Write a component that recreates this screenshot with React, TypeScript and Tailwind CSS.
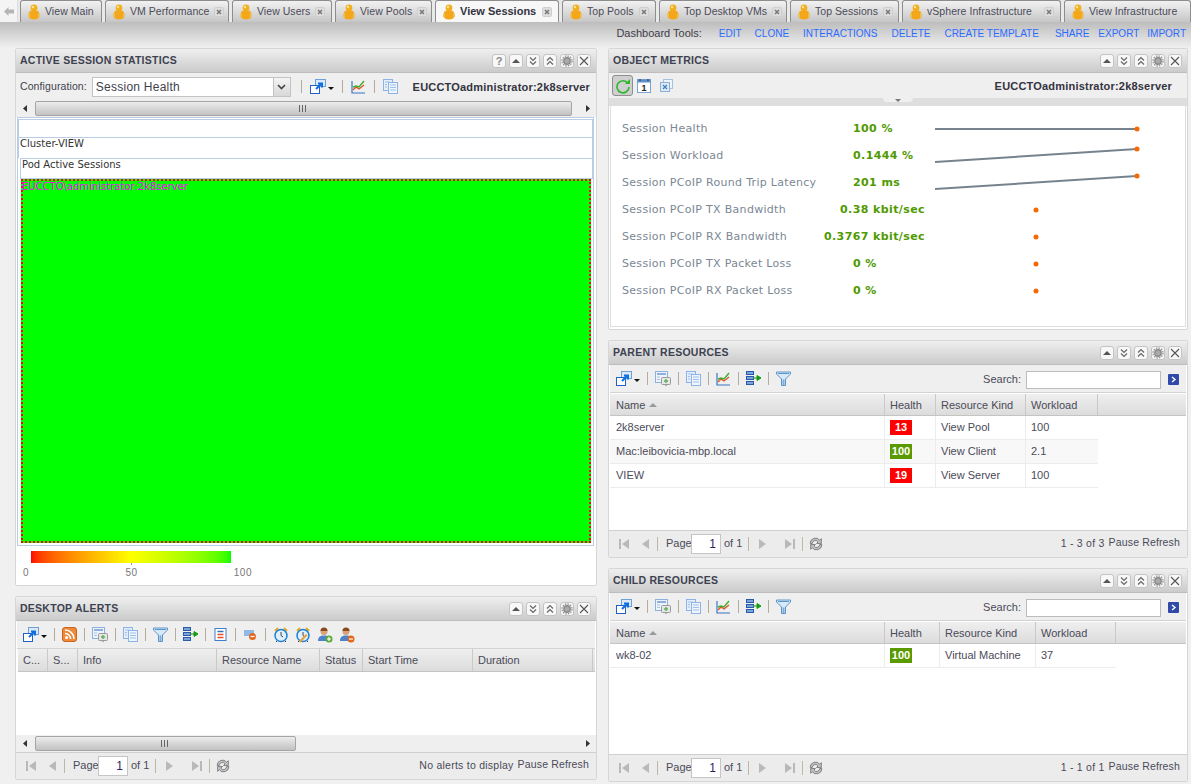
import React from "react"

const tabs = [
  { label: "View Main", w: "w-[82px]", close: false },
  { label: "VM Performance", w: "w-[124px]", close: true },
  { label: "View Users", w: "w-[100px]", close: true },
  { label: "View Pools", w: "w-[97px]", close: true },
  { label: "View Sessions", w: "w-[124px]", close: true, active: true },
  { label: "Top Pools", w: "w-[94px]", close: true },
  { label: "Top Desktop VMs", w: "w-[128px]", close: true },
  { label: "Top Sessions", w: "w-[109px]", close: true },
  { label: "vSphere Infrastructure", w: "w-[159px]", close: true },
  { label: "View Infrastructure", w: "w-[127px]", close: false },
]

const metrics = [
  { label: "Session Health", value: "100 %", line: [13, 13] },
  { label: "Session Workload", value: "0.1444 %", line: [19, 6] },
  { label: "Session PCoIP Round Trip Latency", value: "201 ms", line: [19, 6] },
  { label: "Session PCoIP TX Bandwidth", value: "0.38 kbit/sec", right: true },
  { label: "Session PCoIP RX Bandwidth", value: "0.3767 kbit/sec", right: true },
  { label: "Session PCoIP TX Packet Loss", value: "0 %" },
  { label: "Session PCoIP RX Packet Loss", value: "0 %" },
]

function Person() {
  return (
    <svg width="12" height="16" viewBox="0 0 12 16" className="shrink-0">
      <circle cx="6" cy="4" r="3.400" fill="#f2b01e" />
      <path d="M1 8.500C1 7 3 6.500 6 6.500s5 .5 5 2V13c0 1.500-2 2.500-5 2.500S1 14.500 1 13z" fill="#f5a71c" />
      <path d="M0 9.500h2V13H0zM10 9.500h2V13h-2z" fill="#e8c25a" />
      <circle cx="5" cy="3" r="1.200" fill="#fbe39a" />
    </svg>
  )
}

function CloseTab() {
  return (
    <svg width="10" height="10" viewBox="0 0 10 10" className="shrink-0">
      <rect x="0.500" y="0.500" width="9" height="9" rx="1.500" fill="#dedede" stroke="#cfcfcf" />
      <path d="M3 3l4 4M7 3l-4 4" stroke="#777" strokeWidth="1.500" />
    </svg>
  )
}

function Tab({ label, w, close, active }: { label: string; w: string; close: boolean; active?: boolean }) {
  return (
    <div
      className={`${w} shrink-0 h-[22px] flex items-center pl-[7px] pr-[6px] gap-[5px] border border-b-0 border-[#8d8d8d] rounded-t-[3px] whitespace-nowrap ${
        active ? "bg-[#f7f7f7] font-bold text-[11px] text-[#333340]" : "bg-gradient-to-b from-[#f2f2f2] to-[#c6c6c6] text-[10.5px] tracking-[0.05px] text-[#4a4a58]"
      }`}
    >
      <Person />
      <span className="flex-1">{label}</span>
      {close && <CloseTab />}
    </div>
  )
}

function WinIcon({ kind }: { kind: string }) {
  return (
    <div className="w-[14px] h-[14px] rounded-[3px] border border-[#c4c4c4] bg-[#f8f8f8] flex items-center justify-center">
      <svg width="12" height="12" viewBox="0 0 12 12">
        {kind === "help" && <text x="6" y="10" textAnchor="middle" fontSize="11" fontWeight="700" fontFamily="Liberation Sans" fill="#888">?</text>}
        {kind === "up" && <path d="M2 8l4-4 4 4z" fill="#555" />}
        {kind === "down2" && <path d="M3 2.500l3 3 3-3M3 6.500l3 3 3-3" fill="none" stroke="#666" strokeWidth="1.200" />}
        {kind === "up2" && <path d="M3 5.500l3-3 3 3M3 9.500l3-3 3 3" fill="none" stroke="#666" strokeWidth="1.200" />}
        {kind === "gear" && (
          <g>
            <circle cx="6" cy="6" r="3.200" fill="#aaa" stroke="#888" strokeWidth="1.400" />
            <circle cx="6" cy="6" r="5" fill="none" stroke="#999" strokeWidth="1.400" strokeDasharray="1.500 1.100" />
          </g>
        )}
        {kind === "x" && <path d="M2 2l8 8M10 2l-8 8" stroke="#555" strokeWidth="1.100" />}
      </svg>
    </div>
  )
}

function PanelHeader({ title, help }: { title: string; help?: boolean }) {
  return (
    <div className="h-[24px] shrink-0 flex items-center justify-between pl-[4px] pr-[5px] bg-gradient-to-b from-[#efefef] to-[#cbcbcb] border-b border-[#bdbdbd]">
      <span className="text-[10.5px] font-bold tracking-[0.25px] text-[#3d4250]">{title}</span>
      <div className="flex gap-[3px]">
        {help && <WinIcon kind="help" />}
        <WinIcon kind="up" />
        <WinIcon kind="down2" />
        <WinIcon kind="up2" />
        <WinIcon kind="gear" />
        <WinIcon kind="x" />
      </div>
    </div>
  )
}

function Sep() {
  return <div className="w-px h-[13px] bg-[#b5ad9c] shrink-0" />
}

function ExportIcon() {
  return (
    <svg width="24" height="16" viewBox="0 0 24 16" className="shrink-0">
      <rect x="5.500" y="0.500" width="10" height="7" fill="#dbe9fa" stroke="#6f9fd8" />
      <rect x="0.500" y="6.500" width="9" height="8" fill="#fff" stroke="#1f62c4" />
      <path d="M6 10l5-5M8 4.500h4v4" fill="none" stroke="#0f6fe0" strokeWidth="2" />
      <path d="M18 8h6l-3 3z" fill="#111" />
    </svg>
  )
}

function ChartIcon() {
  return (
    <svg width="15" height="14" viewBox="0 0 15 14" className="shrink-0">
      <path d="M1 1v12h13" fill="none" stroke="#3a76c4" strokeWidth="1.200" />
      <path d="M2 10l3-3 3 2 5-4" fill="none" stroke="#e2562a" strokeWidth="1.400" />
      <path d="M2 7l3-1 3 1 5-6" fill="none" stroke="#3fae2f" strokeWidth="1.400" />
    </svg>
  )
}

function CopyIcon() {
  return (
    <svg width="15" height="15" viewBox="0 0 15 15" className="shrink-0">
      <rect x="0.500" y="0.500" width="9" height="11" fill="#e5effb" stroke="#8db3e6" />
      <rect x="5.500" y="3.500" width="9" height="11" fill="#eef5fd" stroke="#8db3e6" />
      <path d="M7 6h6M7 8.500h6M7 11h6M2 3h5M2 5.500h2M2 8h2" stroke="#9dbfec" />
    </svg>
  )
}

function ConfigIcon() {
  return (
    <svg width="16" height="16" viewBox="0 0 16 16" className="shrink-0">
      <rect x="0.500" y="0.500" width="12" height="11" fill="#edf3fb" stroke="#8fb0dc" />
      <path d="M2 3h9" stroke="#8fb0dc" strokeWidth="2" />
      <path d="M2 6h3M2 8.500h3" stroke="#a8c3e6" />
      <rect x="6.500" y="6.500" width="9" height="7" rx="1" fill="#e6e6e6" stroke="#9a9a9a" />
      <path d="M9 10h4M11 8v4" stroke="#5db35d" strokeWidth="1.400" />
      <path d="M10 14l1 1.500 1-1.500z" fill="#9a9a9a" />
    </svg>
  )
}

function MoveIcon() {
  return (
    <svg width="15" height="15" viewBox="0 0 15 15" className="shrink-0">
      <rect x="0.500" y="0.500" width="7" height="3" fill="#7aa2dc" stroke="#2a5aa8" />
      <rect x="0.500" y="5.500" width="7" height="3" fill="#7aa2dc" stroke="#2a5aa8" />
      <rect x="0.500" y="10.500" width="7" height="3" fill="#7aa2dc" stroke="#2a5aa8" />
      <path d="M7 7h4V4.500L15 7l-4 2.500V7" fill="#159a15" stroke="#159a15" />
    </svg>
  )
}

function FunnelIcon() {
  return (
    <svg width="15" height="15" viewBox="0 0 15 15" className="shrink-0">
      <path d="M0.500 1h14v2L9.500 8v6.500h-4V8L.5 3z" fill="#d7e8f8" stroke="#5d95c9" />
      <path d="M2 2.500h11" stroke="#5d95c9" />
      <path d="M6.500 8.500h2V14h-2z" fill="#7aaedb" />
    </svg>
  )
}

function RssIcon() {
  return (
    <svg width="15" height="15" viewBox="0 0 15 15" className="shrink-0">
      <rect x="0.500" y="0.500" width="14" height="14" rx="2.500" fill="#ee8a3a" stroke="#c9651d" />
      <circle cx="4.500" cy="10.500" r="1.500" fill="#fff" />
      <path d="M3 6.500a5.500 5.500 0 0 1 5.500 5.500M3 3a9 9 0 0 1 9 9" fill="none" stroke="#fff" strokeWidth="1.500" />
    </svg>
  )
}

function ListIcon() {
  return (
    <svg width="15" height="15" viewBox="0 0 15 15" className="shrink-0">
      <rect x="2" y="1.500" width="11" height="12" fill="#fff" stroke="#3f7fcf" />
      <path d="M4.500 4.500h6" stroke="#2f6fc0" strokeWidth="1.500" />
      <path d="M4.500 7.500h6M4.500 10.500h6" stroke="#ee4b2b" strokeWidth="1.500" />
    </svg>
  )
}

function AlertRemoveIcon() {
  return (
    <svg width="15" height="15" viewBox="0 0 15 15" className="shrink-0">
      <rect x="1" y="3" width="10" height="6" fill="#8fb8e6" />
      <circle cx="9.500" cy="9.500" r="3.500" fill="#e3661d" />
      <path d="M7.500 9.500h4" stroke="#fff" strokeWidth="1.200" />
    </svg>
  )
}

function ClockIcon({ pencil }: { pencil?: boolean }) {
  return (
    <svg width="16" height="16" viewBox="0 0 16 16" className="shrink-0">
      <path d="M2 4l3-3M14 4l-3-3" stroke="#e6a91e" strokeWidth="2" />
      <path d="M3 15l2-2M13 15l-2-2" stroke="#333" />
      <circle cx="8" cy="8.500" r="6" fill="#dff0fb" stroke="#1d7fd6" strokeWidth="1.500" />
      <path d="M8 5v3.500l2 1.500" fill="none" stroke="#444" />
      {pencil && <path d="M4 14l7-7 1.500 1.500-7 7z" fill="#e8a13a" />}
    </svg>
  )
}

function UserIcon({ remove }: { remove?: boolean }) {
  return (
    <svg width="16" height="16" viewBox="0 0 16 16" className="shrink-0">
      <circle cx="7" cy="4.500" r="3.500" fill="#d8a27a" />
      <path d="M3.500 4a3.500 3.500 0 0 1 7 0z" fill="#8a4a1e" />
      <path d="M1 14c0-4 2-5.500 6-5.500s6 1.500 6 5.500z" fill="#4d83c9" />
      <circle cx="12" cy="12" r="3.500" fill={remove ? "#e3661d" : "#5aa83a"} />
      <path d={remove ? "M10 12h4" : "M10 12h4M12 10v4"} stroke="#fff" strokeWidth="1.200" />
    </svg>
  )
}

function GridTools() {
  return (
    <>
      <ExportIcon />
      <Sep />
      <ConfigIcon />
      <Sep />
      <CopyIcon />
      <Sep />
      <ChartIcon />
      <Sep />
      <MoveIcon />
      <Sep />
      <FunnelIcon />
    </>
  )
}

function HScroll({ thumb, grip }: { thumb: string; grip: string }) {
  return (
    <div className="h-[17px] shrink-0 flex items-center bg-[#efefef]">
      <div className="w-[19px] flex justify-center shrink-0">
        <svg width="5" height="7" viewBox="0 0 5 7"><path d="M4 0L0 3.500 4 7z" fill="#333" /></svg>
      </div>
      <div className={`${thumb} h-[15px] rounded-[2px] border border-[#a5a5a5] bg-gradient-to-b from-[#ececec] to-[#c2c2c2] flex items-center ${grip}`}>
        <span className="w-[7px] h-[7px] border-x border-[#666] flex justify-center">
          <span className="w-px h-full bg-[#666]" />
        </span>
      </div>
      <div className="flex-1" />
      <div className="w-[17px] flex justify-center shrink-0">
        <svg width="5" height="7" viewBox="0 0 5 7"><path d="M1 0l4 3.500L1 7z" fill="#333" /></svg>
      </div>
    </div>
  )
}

function Pager({ info }: { info: string }) {
  const nav = "#b9b9b9"
  return (
    <div className="h-[27px] shrink-0 flex items-center pl-[8px] pr-[7px] pb-[1px] bg-[#ececec] border-t border-[#cfcfcf] text-[11px] text-[#4a4a58]">
      <svg width="12" height="12" viewBox="0 0 12 12" className="ml-[1px]"><path d="M1 1h2v10H1zM11 1v10L4 6z" fill={nav} /></svg>
      <svg width="10" height="12" viewBox="0 0 10 12" className="ml-[11px]"><path d="M8 1v10L1 6z" fill={nav} /></svg>
      <div className="w-px h-[14px] bg-[#bdb6a6] ml-[6px]" />
      <span className="ml-[8px] w-[25px]">Page</span>
      <div className="w-[30px] h-[20px] bg-white border border-[#c5c5c5] flex items-center justify-end pr-[4px] text-[12px] text-[#332266]">1</div>
      <span className="ml-[3px]">of 1</span>
      <div className="w-px h-[14px] bg-[#bdb6a6] ml-[6px]" />
      <svg width="10" height="12" viewBox="0 0 10 12" className="ml-[8px]"><path d="M2 1v10l7-5z" fill={nav} /></svg>
      <svg width="12" height="12" viewBox="0 0 12 12" className="ml-[17px]"><path d="M1 1v10l7-5zM9 1h2v10H9z" fill={nav} /></svg>
      <div className="w-px h-[14px] bg-[#bdb6a6] ml-[6px]" />
      <svg width="16" height="16" viewBox="0 0 15 15" className="ml-[5px]">
        <path d="M2 7a5 5 0 0 1 9-3l1.500-1.500V7H8l1.500-1.500A3 3 0 0 0 4 7z" fill="#c4c4c4" stroke="#666" strokeWidth="0.700" />
        <path d="M13 8a5 5 0 0 1-9 3l-1.500 1.500V8H7l-1.500 1.500A3 3 0 0 0 11 8z" fill="#c4c4c4" stroke="#666" strokeWidth="0.700" />
      </svg>
      <div className="flex-1" />
      <span className="text-[10.5px] tracking-[0.25px]">{info}</span>
      <span className="ml-[4px] mb-[1px] text-[10.5px] tracking-[0.15px]">Pause Refresh</span>
    </div>
  )
}

function HeaderCell({ w, first, children }: { w: string; first?: boolean; children: React.ReactNode }) {
  return (
    <div className={`${w} ${first ? "pl-[6px]" : "pl-[5px]"} shrink-0 h-full pt-[1px] flex items-center border-r border-[#c9c9c9] text-[11px] text-[#4a4a58] whitespace-nowrap overflow-hidden`}>
      {children}
    </div>
  )
}

function NameSort() {
  return (
    <>
      Name
      <svg width="8" height="4" viewBox="0 0 8 4" className="ml-[4px]"><path d="M0 4l4-4 4 4z" fill="#999" /></svg>
    </>
  )
}

function Badge({ n, green }: { n: string; green?: boolean }) {
  return (
    <span className={`w-[22px] h-[15px] flex items-center justify-center text-[11px] font-bold text-white ${green ? "bg-[#5a9a00]" : "bg-[#ff0000]"}`}>
      {n}
    </span>
  )
}

function Row({ cells, w, tint }: { cells: [string, string, boolean, string, string]; w: string[]; tint?: boolean }) {
  const cell = "shrink-0 h-full flex items-center border-r border-[#ececec]"
  return (
    <div className={`flex h-[24px] border-b border-[#ececec] text-[11px] text-[#4a4a58] w-fit ${tint ? "bg-[#f8f8f8]" : "bg-white"}`}>
      <div className={`${cell} pl-[6px] ${w[0]}`}>{cells[0]}</div>
      <div className={`${cell} pl-[5px] ${w[1]}`}><Badge n={cells[1]} green={cells[2]} /></div>
      <div className={`${cell} pl-[5px] ${w[2]}`}>{cells[3]}</div>
      <div className={`${w[3]} shrink-0 h-full flex items-center pl-[5px]`}>{cells[4]}</div>
    </div>
  )
}

function SearchBox() {
  return (
    <div className="ml-auto pt-[2px] flex items-center text-[11px] text-[#4a4a58]">
      Search:
      <div className="ml-[5px] w-[135px] h-[18px] bg-white border border-[#bcbcbc]" />
      <div className="ml-[7px] w-[11px] h-[11px] rounded-[1px] bg-[#2f4aa8] flex items-center justify-center">
        <svg width="7" height="7" viewBox="0 0 7 7"><path d="M2 1l3 2.500L2 6" fill="none" stroke="#fff" strokeWidth="1.400" /></svg>
      </div>
    </div>
  )
}

function ResourcePanel({
  title,
  rows,
  widths,
  footer,
  h,
}: {
  title: string
  rows: [string, string, boolean, string, string][]
  widths: string[]
  footer: string
  h: string
}) {
  return (
    <section className={`${h} shrink-0 flex flex-col bg-white border border-[#d6d6d6] rounded-[2px]`}>
      <PanelHeader title={title} />
      <div className="h-[28px] shrink-0 flex items-center gap-[7px] pl-[6px] pr-[7px] bg-[#efefef] border-b border-[#d2d2d2] mx-px">
        <GridTools />
        <SearchBox />
      </div>
      <div className="flex-1 flex flex-col mx-[1px] pt-[1px] min-h-0">
        <div className="h-[22px] shrink-0 flex bg-gradient-to-b from-[#efefef] to-[#dcdcdc] border-b border-[#c4c4c4]">
          <HeaderCell w={widths[0]} first><NameSort /></HeaderCell>
          <HeaderCell w={widths[1]}>Health</HeaderCell>
          <HeaderCell w={widths[2]}>Resource Kind</HeaderCell>
          <HeaderCell w={widths[3]}>Workload</HeaderCell>
        </div>
        {rows.map((r, i) => (
          <Row key={r[0]} cells={r} w={widths} tint={i === 1} />
        ))}
      </div>
      <Pager info={footer} />
    </section>
  )
}

export default function App() {
  const alertCols: [string, string][] = [
    ["w-[30px]", "C..."],
    ["w-[30px]", "S..."],
    ["w-[139px]", "Info"],
    ["w-[103px]", "Resource Name"],
    ["w-[43px]", "Status"],
    ["w-[110px]", "Start Time"],
    ["w-[120px]", "Duration"],
  ]
  return (
    <div className="w-[1191px] h-[784px] overflow-hidden bg-[#f0f0f0] font-['Liberation_Sans',Arial,sans-serif]">
      {/* dashboard tabs */}
      <div className="h-[22px] flex items-start bg-[#e9e9e9]">
        <div className="w-[18px] h-[22px] shrink-0 flex items-center justify-center bg-[#f4f4f4] border-r border-[#ddd] mr-[2px]">
          <svg width="10" height="9" viewBox="0 0 10 9"><path d="M0 4.500L4.500 0v2.500H10v4H4.500V9z" fill="#b5b5b5" /></svg>
        </div>
        <div className="flex gap-[3px]">
          {tabs.map((t) => (
            <Tab key={t.label} {...t} />
          ))}
        </div>
      </div>

      {/* tools */}
      <div className="h-[26px] flex items-center pr-[5px] pb-[4px] justify-end bg-gradient-to-b from-[#bdbdbd] to-[#f0f0f0] text-[10px]">
        <span className="text-[11px] text-[#3d3d48] mr-[17px]">Dashboard Tools:</span>
        <div className="flex text-[#2b6bff] whitespace-nowrap">
          <span className="mr-[13px]">EDIT</span>
          <span className="mr-[14px]">CLONE</span>
          <span className="mr-[14px]">INTERACTIONS</span>
          <span className="mr-[14px]">DELETE</span>
          <span className="mr-[16px]">CREATE TEMPLATE</span>
          <span className="mr-[9px]">SHARE</span>
          <span className="mr-[8px]">EXPORT</span>
          <span>IMPORT</span>
        </div>
      </div>

      <div className="flex gap-[11px] pl-[15px]">
        {/* left column */}
        <div className="w-[582px] shrink-0 flex flex-col gap-[10px]">
          <section className="h-[538px] flex flex-col bg-white border border-[#d6d6d6] rounded-[2px]">
            <PanelHeader title="ACTIVE SESSION STATISTICS" help />
            <div className="h-[27px] shrink-0 flex items-center pl-[4px] pr-[6px] bg-[#efefef] text-[#3f3f4c]">
              <span className="text-[10.5px] tracking-[0.1px]">Configuration:</span>
              <div className="ml-[5px] w-[199px] h-[20px] flex items-center justify-between bg-white border border-[#c3c3c3] pl-[3px] text-[12px] tracking-[0.25px]">
                Session Health
                <div className="w-[17px] h-full bg-gradient-to-b from-[#f4f4f4] to-[#d8d8d8] border-l border-[#c3c3c3] flex items-center justify-center">
                  <svg width="9" height="6" viewBox="0 0 9 6"><path d="M1 1l3.500 3.500L8 1" fill="none" stroke="#444" strokeWidth="1.600" /></svg>
                </div>
              </div>
              <div className="ml-[10px] flex items-center gap-[8px]">
                <Sep />
                <ExportIcon />
                <Sep />
                <ChartIcon />
                <Sep />
                <CopyIcon />
              </div>
              <span className="ml-auto pt-[1px] text-[11px] font-bold text-[#333340] tracking-[0.2px]">EUCCTOadministrator:2k8server</span>
            </div>
            <HScroll thumb="w-[537px]" grip="pl-[263px]" />
            <div className="flex-1 flex flex-col pl-[1px] pr-[2px] min-h-0 font-['DejaVu_Sans',sans-serif]">
              <div className="h-[429px] border border-[#b9cde5] pt-[1px] flex flex-col">
                <div className="h-[19px] shrink-0 border border-[#b9cde5]" />
                <div className="h-[20px] shrink-0 border-x border-[#b9cde5] pl-[1px] text-[10px] leading-[12px] text-[#333]">Cluster-VIEW</div>
                <div className="h-[21px] shrink-0 ml-[2px] border border-[#b9cde5] pl-[1px] text-[10px] leading-[12px] text-[#333]">Pod Active Sessions</div>
                <div className="flex-1 ml-[3px] mr-[2px] mb-[2px] bg-[#00ff00] border-[2px] border-dotted border-[#ff0000] text-[10px] leading-[11px] text-[#ff00ff] whitespace-nowrap">
                  <span className="-ml-[1px]">EUCCTO\administrator:2k8server</span>
                </div>
              </div>
              <div className="pl-[14px] pt-[5px] font-['Liberation_Sans',sans-serif]">
                <div className="w-[200px] h-[12px] bg-gradient-to-r from-[#ff0000] via-[#ffff00] to-[#00ff00]" />
                <div className="w-[200px] h-[2px] flex justify-center"><div className="w-px h-full bg-[#999]" /></div>
                <div className="w-[229px] -ml-[8px] flex justify-between text-[10px] text-[#777] tracking-[0.5px]">
                  <span>0</span>
                  <span>50</span>
                  <span>100</span>
                </div>
              </div>
            </div>
          </section>

          <section className="h-[184px] flex flex-col bg-white border border-[#d6d6d6] rounded-[2px]">
            <PanelHeader title="DESKTOP ALERTS" />
            <div className="h-[28px] shrink-0 flex items-center gap-[7px] pl-[6px] bg-[#efefef] border-b border-[#d2d2d2] mx-px">
              <ExportIcon />
              <Sep />
              <RssIcon />
              <Sep />
              <ConfigIcon />
              <Sep />
              <CopyIcon />
              <Sep />
              <FunnelIcon />
              <Sep />
              <MoveIcon />
              <Sep />
              <ListIcon />
              <Sep />
              <AlertRemoveIcon />
              <Sep />
              <div className="flex items-center gap-[6px]">
                <ClockIcon />
                <ClockIcon pencil />
                <UserIcon />
                <UserIcon remove />
              </div>
            </div>
            <div className="h-[23px] shrink-0 flex ml-[2px] mr-px bg-gradient-to-b from-[#efefef] to-[#dcdcdc] border-b border-[#c4c4c4]">
              {alertCols.map(([w, t]) => (
                <HeaderCell key={t} w={w}>{t}</HeaderCell>
              ))}
            </div>
            <div className="flex-1 bg-white" />
            <HScroll thumb="w-[261px]" grip="pl-[125px]" />
            <Pager info="No alerts to display" />
          </section>
        </div>

        {/* right column */}
        <div className="w-[580px] shrink-0 flex flex-col gap-[10px]">
          <section className="h-[282px] flex flex-col bg-white border border-[#d6d6d6] rounded-[2px]">
            <PanelHeader title="OBJECT METRICS" />
            <div className="h-[25px] shrink-0 flex items-center pl-[3px] pr-[15px] bg-[#efefef] text-[11px]">
              <div className="w-[21px] h-[21px] rounded-[3px] border border-[#8f8f8f] bg-[#cfcfcf] flex items-center justify-center">
                <svg width="16" height="16" viewBox="0 0 16 16">
                  <path d="M13 5.500A6 6 0 1 0 14 9" fill="none" stroke="#2eb82e" strokeWidth="1.600" />
                  <path d="M10 6h5V1z" fill="#2eb82e" />
                </svg>
              </div>
              <svg width="14" height="15" viewBox="0 0 14 15" className="ml-[4px]">
                <rect x="0.500" y="1.500" width="13" height="13" fill="#fff" stroke="#7aa4d4" />
                <rect x="0.500" y="1.500" width="13" height="3" fill="#5a8fcb" />
                <path d="M3 1v2M11 1v2" stroke="#333" />
                <text x="7" y="13" textAnchor="middle" fontSize="9" fontWeight="700" fontFamily="Liberation Sans" fill="#222">1</text>
              </svg>
              <svg width="13" height="13" viewBox="0 0 13 13" className="ml-[9px]">
                <rect x="3.500" y="0.500" width="9" height="9" fill="#eef4fb" stroke="#a5c1e0" />
                <rect x="0.500" y="3.500" width="9" height="9" fill="#dde9f6" stroke="#8fb0d4" />
                <path d="M3 6l4 4M7 6l-4 4" stroke="#3f7fc0" strokeWidth="1.200" />
              </svg>
              <span className="ml-auto pt-[1px] font-bold text-[#333340] tracking-[0.2px]">EUCCTOadministrator:2k8server</span>
            </div>
            <div className="h-[8px] shrink-0 bg-[#dedede] flex justify-center">
              <div className="w-[30px] h-[4px] bg-[#efefef] rounded-b-[4px] flex justify-center items-center">
                <svg width="6" height="3" viewBox="0 0 6 3"><path d="M0 0h6L3 3z" fill="#777" /></svg>
              </div>
            </div>
            <div className="flex-1 mx-[1px] mb-[2px] border-x border-b border-[#dedede] pl-[11px] pt-[10px] font-['DejaVu_Sans',sans-serif] text-[11px]">
              {metrics.map((m) => (
                <div key={m.label} className="h-[27px] flex items-center">
                  <span className="w-[231px] shrink-0 text-[#7b8794] tracking-[0.3px] whitespace-nowrap">{m.label}</span>
                  <span className={`w-[72px] shrink-0 font-bold text-[#4f9a00] whitespace-nowrap tracking-[0.4px] ${m.right ? "flex justify-end" : ""}`}>{m.value}</span>
                  <svg width="210" height="27" viewBox="0 0 210 27" className="ml-[5px]">
                    {m.line ? (
                      <>
                        <line x1="5" y1={m.line[0]} x2="207" y2={m.line[1]} stroke="#76838f" strokeWidth="2" />
                        <circle cx="207" cy={m.line[1]} r="2.500" fill="#f56a00" />
                      </>
                    ) : (
                      <circle cx="106" cy="13" r="2.500" fill="#f56a00" />
                    )}
                  </svg>
                </div>
              ))}
            </div>
          </section>

          <ResourcePanel
            title="PARENT RESOURCES"
            h="h-[218px]"
            widths={["w-[275px]", "w-[51px]", "w-[90px]", "w-[72px]"]}
            footer="1 - 3 of 3"
            rows={[
              ["2k8server", "13", false, "View Pool", "100"],
              ["Mac:leibovicia-mbp.local", "100", true, "View Client", "2.1"],
              ["VIEW", "19", false, "View Server", "100"],
            ]}
          />
          <ResourcePanel
            title="CHILD RESOURCES"
            h="h-[214px]"
            widths={["w-[275px]", "w-[55px]", "w-[96px]", "w-[80px]"]}
            footer="1 - 1 of 1"
            rows={[["wk8-02", "100", true, "Virtual Machine", "37"]]}
          />
        </div>
      </div>
    </div>
  )
}
